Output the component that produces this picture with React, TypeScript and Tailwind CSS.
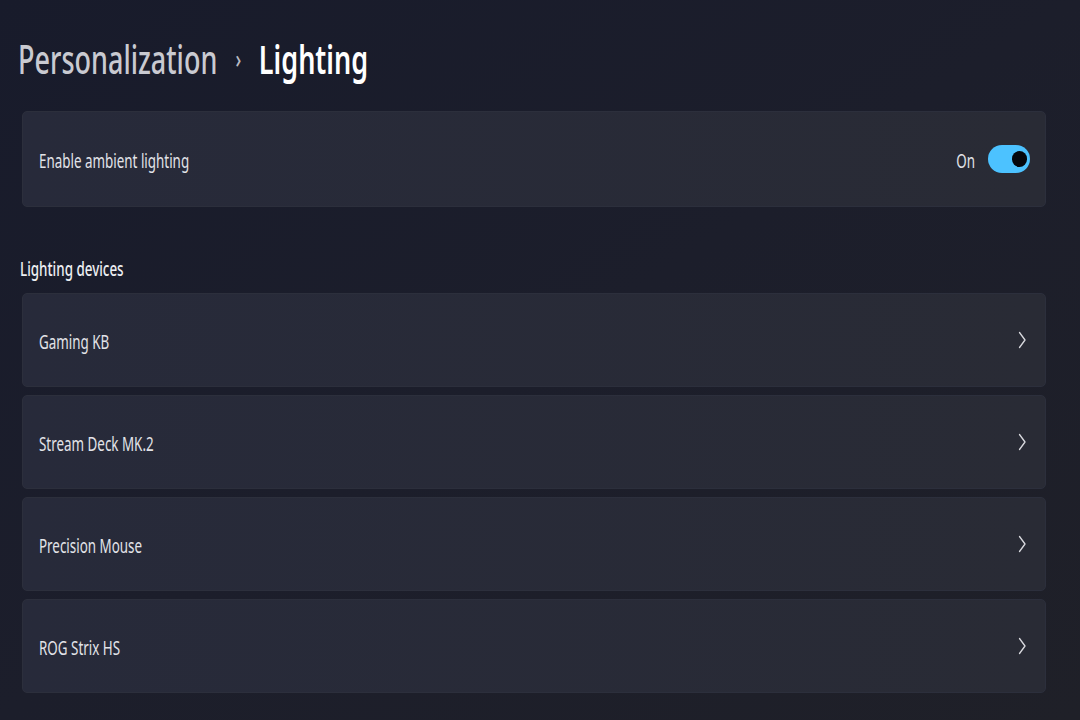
const devices = ["Gaming KB", "Stream Deck MK.2", "Precision Mouse", "ROG Strix HS"];

const font = { fontFamily: '"Noto Sans", "Segoe UI", sans-serif' };

const Chevron = () => (
    <svg width="10" height="18" viewBox="0 0 10 18" fill="none" className="text-[#d8d9de]">
        <path d="M2.5 1.5 L8 9 L2.5 16.5" stroke="currentColor" strokeWidth="1.3" strokeLinecap="round" strokeLinejoin="round" />
    </svg>
);

const Squeeze = ({ children, className = "" }: { children: React.ReactNode; className?: string }) => (
    <span className={`inline-block origin-left scale-x-[0.67] whitespace-nowrap ${className}`}>{children}</span>
);

export default function App() {
    return (
        <div
            className="h-[720px] w-[1080px] overflow-hidden bg-gradient-to-br from-[#181b2b] via-[#1c1e2b] to-[#1f2028] pl-[22px] pr-[34px] text-[#e2e3e8]"
            style={font}
        >
            {/* Breadcrumb header */}
            <div className="-ml-[4px] flex h-[111px] items-center pt-[6px]">
                <span className="inline-block origin-left scale-x-[0.675] whitespace-nowrap text-[40px] leading-none font-medium">
                    <span className="text-[#c9cad1]">Personalization</span>
                    <span className="ml-[27px] mr-[26px] text-[26px] align-[6px] text-[#b9bac2]">›</span>
                    <span className="font-semibold text-white">Lighting</span>
                </span>
            </div>

            {/* Ambient toggle */}
            <div className="flex h-[96px] items-center justify-between rounded-[5px] border border-[#2c2f3c] bg-gradient-to-r from-[#272a3a] to-[#292b35] pl-[16px] pr-[15px]">
                <Squeeze className="translate-y-[2px] text-[20px]">Enable ambient lighting</Squeeze>
                <div className="flex items-center">
                    <span className="mr-[13px] inline-block origin-right translate-y-[2px] scale-x-[0.67] text-[20px]">On</span>
                    <div className="flex h-[28px] w-[42px] items-center justify-end rounded-full bg-[#4cc2ff] pr-[3px]">
                        <div className="h-[16px] w-[15px] rounded-full bg-[#05070d]" />
                    </div>
                </div>
            </div>

            <div className="-ml-[2px] mt-[50px] mb-[12px] flex h-[24px] items-center">
                <Squeeze className="text-[20px] font-medium text-[#eceef2]">Lighting devices</Squeeze>
            </div>

            <div className="flex flex-col gap-[8px]">
                {devices.map((d) => (
                    <div
                        key={d}
                        className="flex h-[94px] items-center justify-between rounded-[5px] border border-[#2c2f3c] bg-gradient-to-r from-[#272a3a] to-[#292b35] pl-[16px] pr-[18px]"
                    >
                        <Squeeze className="translate-y-[2px] text-[20px]">{d}</Squeeze>
                        <Chevron />
                    </div>
                ))}
            </div>
        </div>
    );
}
